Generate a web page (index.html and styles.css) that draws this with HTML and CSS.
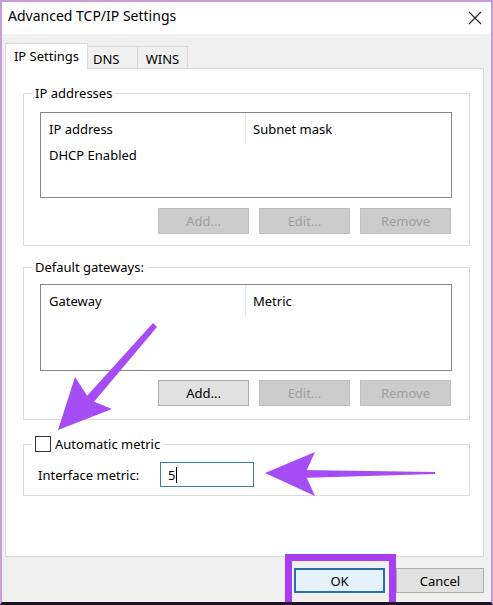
FILE: index.html
```html
<!DOCTYPE html>
<html>
<head>
<meta charset="utf-8">
<link rel="stylesheet" href="styles.css">
</head>
<body>
<div class="window">
  <div class="titlebar">
    <span class="title">Advanced TCP/IP Settings</span>
    <svg class="close" width="14" height="14" viewBox="0 0 14 14"><path d="M1 1 L13 13 M13 1 L1 13" stroke="#222" stroke-width="1.1" fill="none"/></svg>
  </div>
  <div class="content">
    <div class="tabs">
      <div class="tab active">IP Settings</div>
      <div class="tab dns">DNS</div>
      <div class="tab">WINS</div>
    </div>
    <div class="panel">
      <fieldset class="group g1">
        <legend>IP addresses</legend>
        <div class="listbox lb1">
          <div class="lhead"><span class="col1">IP address</span><span class="col2">Subnet mask</span></div>
          <div class="lrow">DHCP Enabled</div>
        </div>
        <div class="btnrow">
          <button class="btn disabled">Add...</button>
          <button class="btn disabled">Edit...</button>
          <button class="btn disabled">Remove</button>
        </div>
      </fieldset>
      <fieldset class="group g2">
        <legend>Default gateways:</legend>
        <div class="listbox lb2">
          <div class="lhead"><span class="col1">Gateway</span><span class="col2">Metric</span></div>
        </div>
        <div class="btnrow">
          <button class="btn">Add...</button>
          <button class="btn disabled">Edit...</button>
          <button class="btn disabled">Remove</button>
        </div>
      </fieldset>
      <fieldset class="group g3">
        <legend class="chklegend"><span class="checkbox"></span><span>Automatic metric</span></legend>
        <div class="metricrow">
          <span class="mlabel">Interface metric:</span>
          <div class="input"><span>5</span><span class="caret"></span></div>
        </div>
      </fieldset>
    </div>
    <div class="footer">
      <button class="btn ok">OK</button>
      <button class="btn cancel">Cancel</button>
    </div>
  </div>
  <svg class="overlay" width="493" height="605" viewBox="0 0 493 605">
    <g fill="#a64cf4">
      <polygon points="153,323 157,327 93,403 86,397"/>
      <polygon points="58,430 75,377 90,400 112,409"/>
      <polygon points="300,470 435,472 435,474 300,478"/>
      <polygon points="265,473 315,452 305,474 315,496"/>
    </g>
    <rect x="288.5" y="557.5" width="104" height="52" fill="none" stroke="#a83ef2" stroke-width="7"/>
  </svg>
</div>
</body>
</html>
```
FILE: styles.css
```css
html, body {
  margin: 0;
  padding: 0;
  background: #ffffff;
}
body {
  font-family: "Noto Sans", "Open Sans", sans-serif;
  font-size: 13px;
  color: #000;
}
.window {
  position: relative;
  width: 493px;
  height: 605px;
  box-sizing: border-box;
  border: 2px solid #c99ddb;
  border-bottom: 3px solid #1d1226;
  background: #f0f0f0;
  display: flex;
  flex-direction: column;
  overflow: hidden;
}
.titlebar {
  box-sizing: border-box;
  height: 32px;
  flex: none;
  background: #ffffff;
  display: flex;
  align-items: center;
  justify-content: space-between;
  padding: 0 9px 5px 6px;
}
.title {
  font-size: 14px;
  color: #000;
}
.close {
  display: block;
  margin-top: 4px;
}
.content {
  flex: 1;
  display: flex;
  flex-direction: column;
  padding: 9px 7px 0 3px;
}
.tabs {
  display: flex;
  align-items: flex-end;
  height: 26px;
  margin-bottom: -1px;
  position: relative;
  z-index: 1;
}
.tab {
  box-sizing: border-box;
  height: 22px;
  margin-bottom: 1px;
  border: 1px solid #d9d9d9;
  border-bottom: none;
  border-left: none;
  background: #f0f0f0;
  display: flex;
  align-items: center;
  justify-content: center;
  padding: 2px 0 0 0;
  width: 50px;
}
.tab.dns {
  justify-content: flex-start;
  padding-left: 5px;
}
.tab.active {
  height: 26px;
  margin-bottom: 0;
  width: 83px;
  background: #ffffff;
  border-left: 1px solid #d9d9d9;
  padding: 0 0 1px 0;
}
.panel {
  box-sizing: border-box;
  height: 489px;
  flex: none;
  background: #ffffff;
  border: 1px solid #d9d9d9;
  padding: 15px 13px 0 17px;
  display: flex;
  flex-direction: column;
}
.group {
  margin: 0;
  border: 1px solid #dcdcdc;
  padding: 0 17px 0 16px;
  min-width: 0;
}
.group legend {
  padding: 0 3px;
  margin-left: -8px;
  line-height: 18px;
  height: 18px;
}
.g1 {
  padding-bottom: 11px;
}
.g2 {
  margin-top: 12px;
  padding-bottom: 13px;
}
.g3 {
  margin-top: 15px;
  padding-bottom: 8px;
  padding-left: 14px;
}
.listbox {
  box-sizing: border-box;
  border: 1px solid #828790;
  background: #fff;
}
.lb1 {
  margin-top: 10px;
  height: 86px;
}
.lb2 {
  margin-top: 8px;
  height: 87px;
}
.lhead {
  display: flex;
  height: 31px;
  align-items: center;
}
.col1 {
  box-sizing: border-box;
  width: 205px;
  height: 31px;
  padding-left: 8px;
  display: flex;
  align-items: center;
  border-right: 1px solid #e5e5e5;
}
.col2 {
  padding-left: 7px;
}
.lrow {
  padding-left: 8px;
  height: 24px;
  line-height: 22px;
}
.btnrow {
  display: flex;
  justify-content: flex-end;
  gap: 10px;
  margin-top: 10px;
  padding-right: 1px;
}
.g2 .btnrow {
  margin-top: 9px;
}
.btn {
  box-sizing: border-box;
  width: 91px;
  height: 26px;
  border: 1px solid #adadad;
  background: #e1e1e1;
  font-family: "Noto Sans", "Open Sans", sans-serif;
  font-size: 13px;
  color: #000;
  padding: 0;
  margin: 0;
}
.btn.disabled {
  background: #cccccc;
  border-color: #bfbfbf;
  color: #a0a0a0;
}
.group .chklegend {
  display: flex;
  align-items: center;
  gap: 4px;
  margin-left: -6px;
  padding: 0 3px;
}
.checkbox {
  box-sizing: border-box;
  display: inline-block;
  width: 16px;
  height: 16px;
  border: 1px solid #333;
  background: #fff;
}
.metricrow {
  display: flex;
  align-items: center;
  margin-top: 9px;
}
.mlabel {
  width: 122px;
}
.input {
  box-sizing: border-box;
  width: 94px;
  height: 25px;
  border: 1px solid #3a7fa8;
  display: flex;
  align-items: center;
  padding-left: 7px;
}
.caret {
  display: inline-block;
  width: 1px;
  height: 16px;
  background: #000;
  margin-left: 1px;
}
.footer {
  flex: 1;
  display: flex;
  justify-content: flex-end;
  align-items: flex-start;
  gap: 11px;
  padding-top: 11px;
  padding-right: 0;
}
.ok {
  width: 91px;
  height: 25px;
  border: 2px solid #2a6fa5;
  background: #e5f1fb;
}
.cancel {
  width: 88px;
  height: 25px;
}
.overlay {
  position: absolute;
  left: -2px;
  top: -2px;
  pointer-events: none;
}
```
